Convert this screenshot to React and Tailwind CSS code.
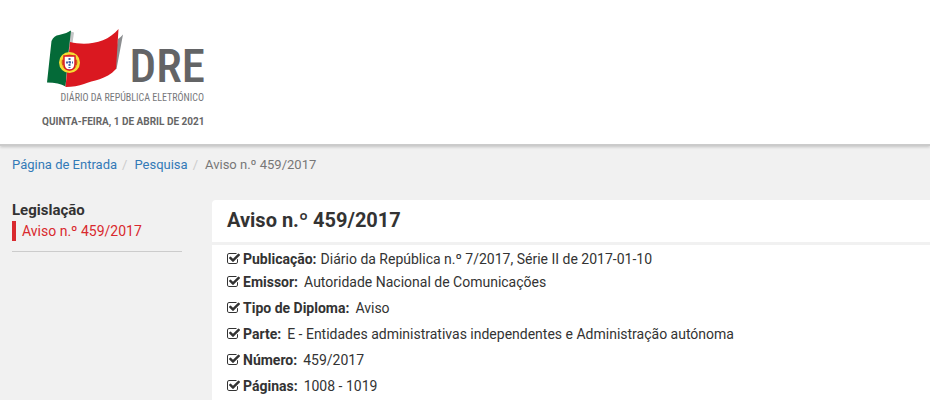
import React from 'react';

const details = [
  { label: 'Emissor:', value: 'Autoridade Nacional de Comunicações' },
  { label: 'Tipo de Diploma:', value: 'Aviso' },
  { label: 'Parte:', value: 'E - Entidades administrativas independentes e Administração autónoma' },
  { label: 'Número:', value: '459/2017' },
  { label: 'Páginas:', value: '1008 - 1019' },
];

const CheckIcon = () => (
  <svg viewBox="64 0 1792 1792" className="w-3.5 h-3.5 mr-0.5 shrink-0" fill="currentColor" aria-hidden="true">
    <path d="M1472 930v318q0 119-84.5 203.5t-203.5 84.5h-832q-119 0-203.5-84.5t-84.5-203.5v-832q0-119 84.5-203.5t203.5-84.5h832q63 0 117 25 15 7 18 23 3 17-9 29l-49 49q-10 10-23 10-3 0-9-2-23-6-45-6h-832q-66 0-113 47t-47 113v832q0 66 47 113t113 47h832q66 0 113-47t47-113v-254q0-13 9-22l64-64q10-10 23-10 6 0 12 3 20 8 20 29zm231-489l-814 814q-24 24-57 24t-57-24l-430-430q-24-24-24-57t24-57l110-110q24-24 57-24t57 24l263 263 647-647q24-24 57-24t57 24l110 110q24 24 24 57t-24 57z" />
  </svg>
);

// Portuguese flag with the DRE wordmark
const Logo = () => (
  <svg viewBox="0 0 160 74" className="w-40 h-[74px]" role="img" aria-label="Diário da República Eletrónico">
    <path d="M24 3 L29 4.5 L27.5 15 L24 20 Z" fill="#c4c5c6" />
    <path d="M73 11 Q76 9 78 6.5 L71.5 41 L68 41 Z" fill="#8b8d8f" />
    <path d="M6.5 13 Q9 7.5 14 7 Q21 6 26 2.5 L24 20 L20.5 58.5 Q14 54.5 2 54.5 Z" fill="#046a38" />
    <path d="M25 14 C42 18 62 15 73.5 1 L71 41 C61 52 48 52 39 56 Q31 59 20.5 59 Z" fill="#da1820" />
    <circle cx="24.5" cy="34.5" r="9.2" fill="#d8571e" stroke="#f5dc32" strokeWidth="2.6" />
    <path d="M16 31 H33 M16 38 H33" stroke="#f5dc32" strokeWidth="1" />
    <path d="M19 28 H30 V36 Q30 42 24.5 42 Q19 42 19 36 Z" fill="#fff" stroke="#da1820" strokeWidth="1.4" />
    <path d="M24.5 30 V40 M21 34.5 H28" stroke="#4a62a8" strokeWidth="2" strokeDasharray="2 1" />
    <text x="160" y="54" fontSize="47" fontWeight="500" textAnchor="end" fill="#636466" fontFamily="'Roboto Condensed', Roboto, sans-serif">DRE</text>
    <text x="159" y="73" fontSize="10" textAnchor="end" fill="#77787b" fontFamily="'Roboto Condensed', Roboto, sans-serif">DIÁRIO DA REPÚBLICA ELETRÓNICO</text>
  </svg>
);

const App = () => {
  return (
    <div className="min-h-screen bg-[#f1f1f1] font-[Roboto,sans-serif] text-sm text-[#333]">
      <header className="bg-white px-[42px] pt-7 pb-[14px] border-b-2 border-[#cbcbcb] shadow-[0_1px_3px_rgba(0,0,0,0.2)]">
        <a href="#inicio" className="block w-fit ml-[3px]">
          <Logo />
        </a>
        <p className="mt-3 text-[10px] leading-4 font-bold text-[#666] uppercase">Quinta-feira, 1 de abril de 2021</p>
      </header>

      <nav className="px-3 pt-[9px] text-[13px] leading-5" aria-label="Navegação">
        <ol className="flex text-[#777]">
          <li><a href="#entrada" className="text-[#337ab7]">Página de Entrada</a></li>
          <li><span className="pl-[5px] pr-[7px] text-[#ccc]">/</span><a href="#pesquisa" className="text-[#337ab7]">Pesquisa</a></li>
          <li><span className="pl-[5px] pr-[7px] text-[#ccc]">/</span>Aviso n.º 459/2017</li>
        </ol>
      </nav>

      <div className="flex items-start pl-3 pt-[25px]">
        <aside className="w-[170px] mr-[30px] shrink-0 border-b border-[#ccc] pb-[10px]">
          <h2 className="text-[15px] leading-[21px] font-bold">Legislação</h2>
          <a href="#aviso" className="block border-l-4 border-[#d9292e] pl-[6px] leading-5 text-[#d9292e]">Aviso n.º 459/2017</a>
        </aside>

        <main className="flex-1 min-w-0 rounded-tl bg-white">
          <h1 className="px-[15px] pt-2 pb-[10px] text-xl leading-6 font-bold border-b-3 border-[#f1f1f1]">Aviso n.º 459/2017</h1>
          <ul className="px-[15px] pt-1 pb-px">
            <li className="flex items-center leading-5">
              <CheckIcon />
              <strong className="mr-1">Publicação:</strong>
              Diário da República n.º 7/2017, Série II de 2017-01-10
            </li>
            {details.map((item) => (
              <li key={item.label} className="flex items-center leading-[26px]">
                <CheckIcon />
                <strong className="mr-[6px]">{item.label}</strong>
                {item.value}
              </li>
            ))}
          </ul>
        </main>
      </div>
    </div>
  );
};

export default App;
